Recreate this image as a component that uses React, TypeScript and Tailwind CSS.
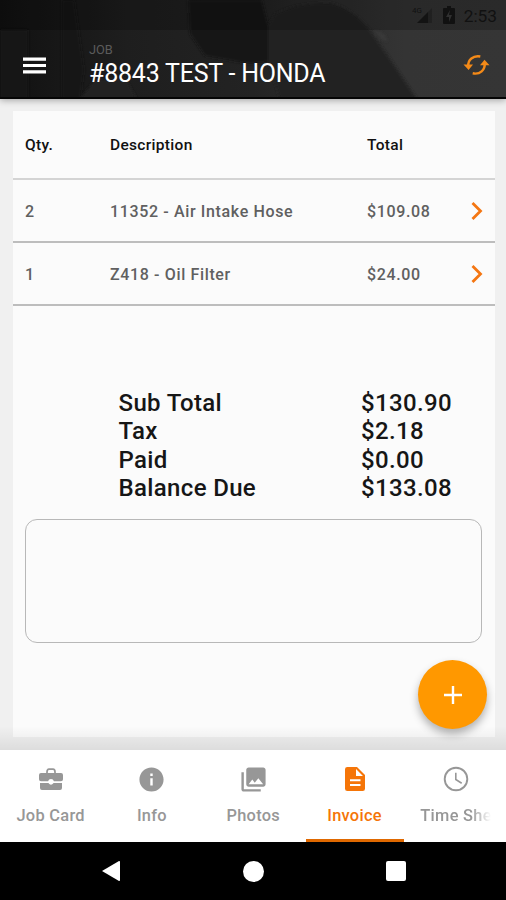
import React from "react";
import { MdInfo, MdPhotoLibrary } from "react-icons/md";

const lines = [
  { qty: "2", name: "11352 - Air Intake Hose", total: "$109.08" },
  { qty: "1", name: "Z418 - Oil Filter", total: "$24.00" },
];

const totals = [
  ["Sub Total", "$130.90"],
  ["Tax", "$2.18"],
  ["Paid", "$0.00"],
  ["Balance Due", "$133.08"],
];

function Backdrop() {
  return (
    <svg className="absolute inset-0" width="506" height="99" viewBox="0 0 506 99" aria-hidden="true">
      <defs>
        <linearGradient id="shade" x1="0" x2="1">
          <stop offset="0" stopColor="#111111" />
          <stop offset="0.25" stopColor="#1e1e1e" />
          <stop offset="0.5" stopColor="#232323" />
          <stop offset="0.8" stopColor="#343434" />
          <stop offset="1" stopColor="#353535" />
        </linearGradient>
        <filter id="soft">
          <feGaussianBlur stdDeviation="1.5" />
        </filter>
      </defs>
      <rect width="506" height="99" fill="url(#shade)" />
      <g filter="url(#soft)">
        <path d="M0 30H28V99H0Z" fill="#131313" />
        <path d="M62 0H74L84 70L80 99H62Z" fill="#141414" />
        <path d="M80 99L95 80L125 78L137 99Z" fill="#222222" />
        <path d="M188 0H262L268 24L282 34V60L250 64L205 56L190 34Z" fill="#191919" />
        <path d="M275 14Q298 2 330 3Q352 8 369 29L388 56L417 99H280L268 60V26Z" fill="#222222" />
        <path d="M374 31Q386 32 387 42L380 37Z" fill="#3b3b3b" />
      </g>
      <rect width="506" height="30" fill="#000000" opacity="0.2" />
      <rect y="97" width="506" height="2" fill="#050505" />
    </svg>
  );
}

function StatusBar() {
  return (
    <div className="flex h-[30px] items-center justify-end pr-[9px] text-[#111111]">
      <svg width="22" height="20" viewBox="0 0 22 20" fill="currentColor" aria-hidden="true">
        <text x="0" y="8" fontSize="8" fontFamily="Roboto, sans-serif">4G</text>
        <path d="M5 18L16 7V18Z" opacity="0.9" />
        <path d="M16 7L20 3V18H16Z" opacity="0.35" />
      </svg>
      <svg className="ml-[9px]" width="12" height="18" viewBox="0 0 12 18" aria-hidden="true">
        <path d="M4 0H8V2H11Q12 2 12 3V17Q12 18 11 18H1Q0 18 0 17V3Q0 2 1 2H4Z" fill="currentColor" />
        <path d="M7 4L3 11H6V16L9 9H6Z" fill="#303030" />
      </svg>
      <span className="ml-[9px] mt-px text-[17.3px] leading-5">2:53</span>
    </div>
  );
}

function MenuIcon() {
  return (
    <svg className="ml-[23px] mt-[2px]" width="23" height="17" viewBox="0 0 23 17" fill="white" aria-hidden="true">
      <path d="M0 0.5H23V3.7H0ZM0 6.9H23V10.1H0ZM0 13.3H23V16.5H0Z" />
    </svg>
  );
}

function SyncIcon() {
  return (
    <svg className="mr-[16px] mt-px" width="27" height="22" viewBox="0 0 27 22" aria-hidden="true">
      <g fill="none" stroke="#f48a18" strokeWidth="2.4">
        <path d="M5.3 12C4.8 6 10 1.2 17.3 2.5" />
        <path d="M21.7 9C22.3 16 17 20.8 9.7 19.3" />
      </g>
      <path d="M0.5 10.5H10L5.6 16Z" fill="#f48a18" />
      <path d="M17 11.2H26.5L21.5 5.7Z" fill="#f48a18" />
    </svg>
  );
}

function ToolboxIcon() {
  return (
    <svg width="26" height="26" viewBox="0 0 26 26" aria-hidden="true">
      <path d="M9 8V6Q9 3.2 11 3.2H15Q17 3.2 17 6V8" fill="none" stroke="currentColor" strokeWidth="1.7" />
      <path d="M3 7H23Q25 7 25 9V13.2Q25 15.2 23 15.2H15.9A3 3 0 0 0 10.1 15.2H3Q1 15.2 1 13.2V9Q1 7 3 7Z" fill="currentColor" />
      <path d="M2 17H10.4Q13 20.6 15.6 17H24V22Q24 24 22 24H4Q2 24 2 22Z" fill="currentColor" />
    </svg>
  );
}

function DocumentIcon() {
  return (
    <svg width="26" height="26" viewBox="0 0 26 26" aria-hidden="true">
      <path d="M5.4 1H15L23 9V22.7Q23 25 20.7 25H5.4Q3 25 3 22.7V3.3Q3 1 5.4 1Z" fill="currentColor" />
      <path d="M14 3V10H21ZM8 13.2H18.5V15.2H8ZM8 18H18.5V20H8Z" fill="white" />
    </svg>
  );
}

function ClockIcon() {
  return (
    <svg width="26" height="26" viewBox="0 0 26 26" fill="none" stroke="currentColor" aria-hidden="true">
      <circle cx="13" cy="13" r="11.3" strokeWidth="1.9" />
      <path d="M12.8 6.8V13.5L18.7 17.2" strokeWidth="1.6" />
    </svg>
  );
}

function Tab({ icon, label, active = false, clipped = false }: { icon: React.ReactNode; label: string; active?: boolean; clipped?: boolean }) {
  return (
    <div className={`flex h-full flex-col items-center pt-4 ${active ? "text-[#f57508]" : "text-[#979797]"}`}>
      <div className="flex h-[26px] items-center">{icon}</div>
      <div className={`mt-[13px] overflow-hidden whitespace-nowrap text-[16.4px] font-medium leading-[22px] tracking-[0.3px] ${clipped ? "w-[71px] [mask-image:linear-gradient(to_right,black_72%,transparent)]" : ""}`}>
        {label}
      </div>
      {active && <div className="mt-auto h-[3px] w-[98px] bg-[#df6800]" />}
    </div>
  );
}

export default function App() {
  return (
    <div className="flex h-[900px] w-[506px] flex-col overflow-hidden bg-[#f0f0f0] font-[Roboto,sans-serif]">
      <header className="relative z-10 h-[99px] shrink-0 shadow-[0_1px_7px_rgba(0,0,0,0.35)]">
        <Backdrop />
        <div className="relative">
          <StatusBar />
          <div className="flex h-[68px] items-center">
            <MenuIcon />
            <div className="ml-[43px] flex-1 pt-[3px]">
              <div className="text-[12.8px] leading-[14px] text-[#5b5b5b]">JOB</div>
              <h1 className="mt-[2px] whitespace-nowrap text-[25px] leading-[30px] tracking-[-0.22px] text-white">#8843 TEST - HONDA</h1>
            </div>
            <SyncIcon />
          </div>
        </div>
      </header>

      <main className="relative h-[651px] shrink-0 pl-[13px] pr-[11px] pt-[12px]">
        <section className="h-[626px] bg-[#fbfbfb] text-[16px] font-medium tracking-[0.64px] text-[#606060]">
          <div className="grid h-[69px] grid-cols-[85px_257px_1fr] items-center border-b-2 border-[#d4d4d4] pl-3 pt-[2px] text-[15.5px] tracking-[0.32px] text-[#111111]">
            <span>Qty.</span>
            <span>Description</span>
            <span>Total</span>
          </div>
          {lines.map((line) => (
            <div key={line.name} className="grid h-[63px] grid-cols-[85px_257px_1fr_24.5px] items-center border-b-2 border-[#bdbdbd] pl-3 pt-[2px]">
              <span>{line.qty}</span>
              <span>{line.name}</span>
              <span>{line.total}</span>
              <svg className="-mt-[2px]" width="12" height="18" viewBox="0 0 12 18" fill="none" stroke="#f47612" strokeWidth="2.8" aria-hidden="true">
                <path d="M1.5 1L9.5 9L1.5 17" />
              </svg>
            </div>
          ))}
          <div className="mt-[83px] text-[24px] leading-[28.4px] tracking-[0.35px] text-[#161616]">
            {totals.map(([label, value]) => (
              <div key={label} className="grid grid-cols-[242.5px_1fr] pl-[105.5px]">
                <span>{label}</span>
                <span>{value}</span>
              </div>
            ))}
          </div>
          <div className="ml-3 mt-[16.4px] h-[124px] w-[457px] rounded-[12px] border-[1.5px] border-[#b8b8b8]" />
        </section>
        <div className="absolute inset-x-0 bottom-0 h-[24px] bg-gradient-to-b from-transparent to-black/8" />
        <button aria-label="Add item" className="absolute right-[19px] top-[561px] flex size-[69px] items-center justify-center rounded-full bg-[#ff9800] shadow-[0_5px_9px_rgba(0,0,0,0.3)]">
          <svg width="18" height="18" viewBox="0 0 18 18" stroke="white" strokeWidth="2.4" aria-hidden="true">
            <path d="M9 0V18M0 9H18" />
          </svg>
        </button>
      </main>

      <nav className="grid h-[92px] shrink-0 grid-cols-[repeat(5,101.3px)] bg-white">
        <Tab icon={<ToolboxIcon />} label="Job Card" />
        <Tab icon={<MdInfo size={29} />} label="Info" />
        <Tab icon={<MdPhotoLibrary size={29} />} label="Photos" />
        <Tab icon={<DocumentIcon />} label="Invoice" active />
        <Tab icon={<ClockIcon />} label="Time Sheet" clipped />
      </nav>

      <footer className="flex h-[58px] shrink-0 items-center bg-black pl-[101px]">
        <svg width="20" height="22" viewBox="0 0 20 22" fill="white" aria-hidden="true">
          <path d="M1 11L18 1Q19 .7 19 2V20Q19 21.3 18 21Z" />
        </svg>
        <div className="ml-[122px] size-[21px] rounded-full bg-white" />
        <div className="ml-[122px] size-5 rounded-[2px] bg-white" />
      </footer>
    </div>
  );
}
